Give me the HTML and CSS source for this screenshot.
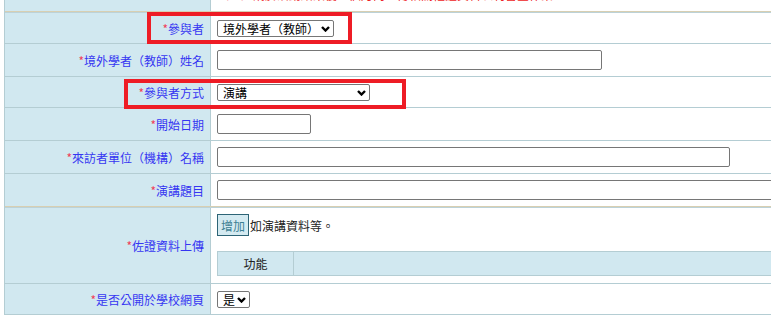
FILE: index.html
```html
<!DOCTYPE html>
<html lang="zh-Hant">
<head>
<meta charset="utf-8">
<link rel="stylesheet" href="styles.css">
</head>
<body>
<div class="page">
  <table class="form">
    <colgroup><col class="c-label"><col class="c-field"></colgroup>
    <tr class="row-prev">
      <td class="label"></td>
      <td class="field"><span class="note">（一）請於活動結束後一個月內上傳相關佐證資料以利審查作業</span></td>
    </tr>
    <tr class="sep"><td colspan="2"></td></tr>
    <tr class="r31">
      <td class="label"><span class="req">*</span>參與者</td>
      <td class="field">
        <span class="selwrap sel-who"><select class="sel"><option>境外學者（教師）</option></select><svg class="chev" width="9" height="6" viewBox="0 0 9 6"><path d="M1 1 L4.5 4.5 L8 1" fill="none" stroke="#000" stroke-width="2.4"/></svg></span>
      </td>
    </tr>
    <tr class="r33">
      <td class="label"><span class="req">*</span>境外學者（教師）姓名</td>
      <td class="field"><input class="txt w384" type="text"></td>
    </tr>
    <tr class="r31">
      <td class="label"><span class="req">*</span>參與者方式</td>
      <td class="field">
        <span class="selwrap sel-way"><select class="sel"><option>演講</option></select><svg class="chev" width="9" height="6" viewBox="0 0 9 6"><path d="M1 1 L4.5 4.5 L8 1" fill="none" stroke="#000" stroke-width="2.4"/></svg></span>
      </td>
    </tr>
    <tr class="r33">
      <td class="label"><span class="req">*</span>開始日期</td>
      <td class="field"><input class="txt w94" type="text"></td>
    </tr>
    <tr class="r33">
      <td class="label"><span class="req">*</span>來訪者單位（機構）名稱</td>
      <td class="field"><input class="txt w513" type="text"></td>
    </tr>
    <tr class="r32 nob">
      <td class="label"><span class="req">*</span>演講題目</td>
      <td class="field"><input class="txt w640" type="text"></td>
    </tr>
    <tr class="sep"><td colspan="2"></td></tr>
    <tr class="r76">
      <td class="label"><span class="req">*</span>佐證資料上傳</td>
      <td class="field upload">
        <div class="addline"><button class="add" type="button">增加</button><span>如演講資料等。</span></div>
        <table class="files">
          <tr><th class="fn">功能</th><th></th></tr>
        </table>
      </td>
    </tr>
    <tr class="r31">
      <td class="label"><span class="req">*</span>是否公開於學校網頁</td>
      <td class="field">
        <span class="selwrap sel-yes"><select class="sel"><option>是</option></select><svg class="chev" width="9" height="6" viewBox="0 0 9 6"><path d="M1 1 L4.5 4.5 L8 1" fill="none" stroke="#000" stroke-width="2.4"/></svg></span>
      </td>
    </tr>
  </table>
  <div class="mark mark1"></div>
  <div class="mark mark2"></div>
</div>
</body>
</html>
```
FILE: styles.css
```css
html { overflow: hidden; }
body {
  margin: 0;
  font-family: "Noto Sans CJK TC", "Noto Sans", sans-serif;
  font-size: 12px;
  background: #fff;
}
.page {
  position: relative;
  width: 771px;
  height: 326px;
  overflow: hidden;
}
.form {
  margin-top: -19px;
  margin-left: 4px;
  width: 900px;
  table-layout: fixed;
  border-collapse: separate;
  border-spacing: 0;
  border-left: 1px solid #b4cdd3;
}
.c-label { width: 206px; }
.form td { padding: 0; }
.label {
  background: #d1e8f0;
  color: #3636f2;
  text-align: right;
  padding-right: 6px !important;
  border-right: 1px solid #b4cdd3;
  border-bottom: 1px solid #b4cdd3;
  white-space: nowrap;
  vertical-align: middle;
}
.field {
  padding-left: 6px !important;
  border-bottom: 1px solid #b4cdd3;
  vertical-align: middle;
  white-space: nowrap;
  overflow: hidden;
}
.req { color: #f0405a; }
.row-prev td { height: 26px; border-bottom: none; }
.row-prev .field { padding-bottom: 4px !important; }
.note { color: #ee1c25; }
.sep td {
  height: 0;
  border-top: 1px solid #d8cfb2;
  border-bottom: 1px solid #bcd2d8;
  background: #d8cfb2;
}
.r31 td { height: 30px; }
.r32 td { height: 32px; }
.r33 td { height: 32px; }
.r76 td { height: 75px; }
.nob td { border-bottom: none; }
.selwrap {
  position: relative;
  display: block;
  height: 17px;
}
.sel {
  -webkit-appearance: none;
  appearance: none;
  box-sizing: border-box;
  font-family: "Noto Sans CJK TC", sans-serif;
  font-size: 12px;
  line-height: 15px;
  width: 100%;
  height: 17px;
  border: 1px solid #767676;
  border-radius: 2px;
  background: #fff;
  color: #000;
  padding: 0 0 0 5px;
  display: block;
  margin: 0;
}
.chev {
  position: absolute;
  right: 4px;
  top: 6px;
  pointer-events: none;
}
.sel-who { width: 117px; }
.sel-way { width: 153px; }
.sel-yes { width: 33px; }
.txt {
  display: block;
  box-sizing: border-box;
  height: 20px;
  border: 1px solid #767676;
  border-radius: 2px;
  padding: 0 3px;
  margin: 0;
}
.w384 { width: 385px; }
.w94 { width: 94px; }
.w513 { width: 513px; }
.w640 { width: 640px; }
.upload { vertical-align: top !important; }
.addline {
  display: flex;
  align-items: center;
  margin-top: 6px;
  color: #222;
}
.add {
  font-family: "Noto Sans CJK TC", sans-serif;
  font-size: 12px;
  width: 32px;
  height: 22px;
  padding: 0;
  border: 1px solid #2d6476;
  background: #d4eaf1;
  color: #3d8094;
  margin: 0 1px 0 0;
}
.files {
  margin-top: 15px;
  width: 700px;
  border-collapse: collapse;
}
.files th {
  height: 23px;
  background: #d1e8f0;
  border: 1px solid #b4cdd3;
  font-weight: normal;
  color: #222;
  padding: 0;
}
.files .fn { width: 75px; }
.mark {
  position: absolute;
  border: 4px solid #ee1c25;
  box-sizing: border-box;
}
.mark1 { left: 147px; top: 12px; width: 205px; height: 32px; }
.mark2 { left: 124px; top: 79px; width: 282px; height: 30px; }
```
